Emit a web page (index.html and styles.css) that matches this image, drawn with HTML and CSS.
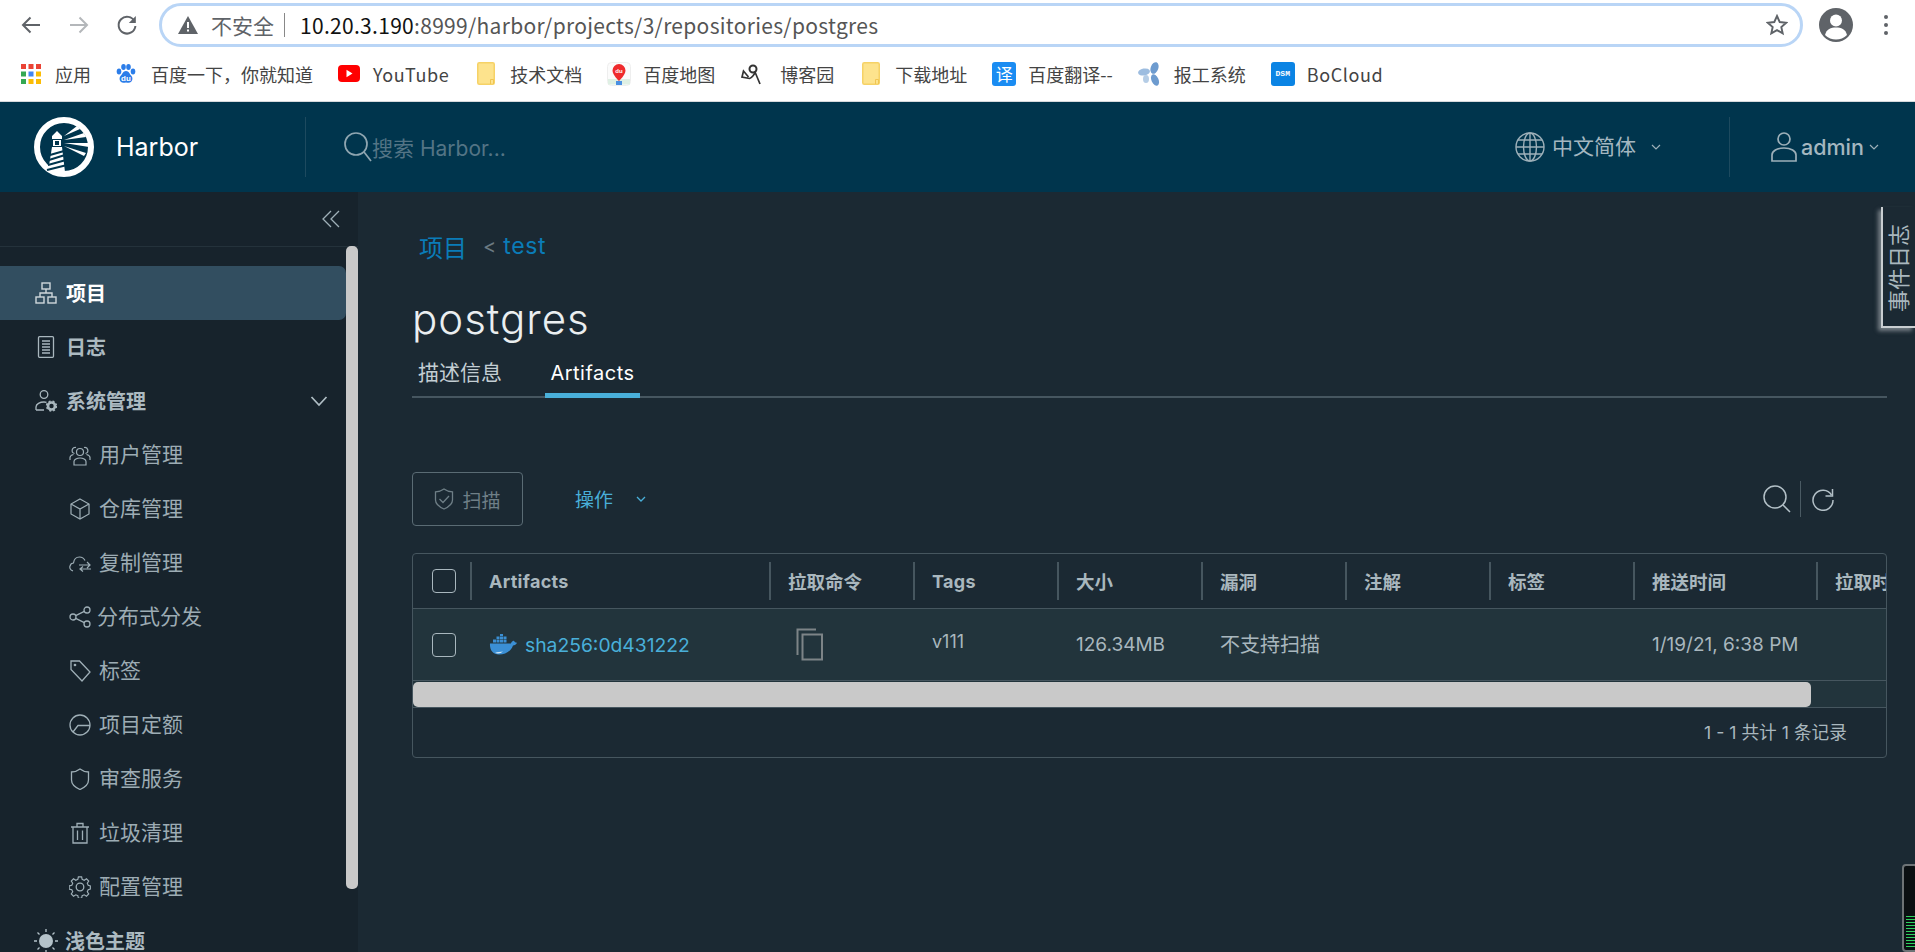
FILE: index.html
```html
<!DOCTYPE html>
<html lang="zh-CN">
<head>
<meta charset="utf-8">
<title>Harbor</title>
<link rel="stylesheet" href="styles.css">
</head>
<body>
<div class="browser-bar">
  <svg class="nav-ico" viewBox="0 0 22 22"><path d="M20 11H3M10.5 3.5 3 11l7.5 7.5" fill="none" stroke="#5f6368" stroke-width="2"/></svg>
  <svg class="nav-ico nav-fwd" viewBox="0 0 22 22"><path d="M2 11h17M11.5 3.5 19 11l-7.5 7.5" fill="none" stroke="#b4b7ba" stroke-width="2"/></svg>
  <svg class="nav-ico nav-reload" viewBox="0 0 22 22"><path d="M18.6 7.5A8.4 8.4 0 1 0 19.4 12" fill="none" stroke="#5f6368" stroke-width="2"/><path d="M19.8 2v7h-7z" fill="#5f6368"/></svg>
  <div class="omnibox">
    <svg class="warn" viewBox="0 0 20 18"><path d="M10 0 20 18H0z" fill="#5f6368"/><path d="M9 6h2v6H9zM9 13.5h2v2H9z" fill="#fff"/></svg>
    <span class="insecure">不安全</span>
    <span class="omni-sep"></span>
    <span class="url"><b>10.20.3.190</b>:8999/harbor/projects/3/repositories/postgres</span>
    <svg class="star" viewBox="0 0 22 22"><path d="m11 2 2.7 6 6.5.7-4.9 4.3 1.4 6.4L11 16.100l-5.700 3.300L6.700 13 1.800 8.700 8.300 8z" fill="none" stroke="#5f6368" stroke-width="1.900"/></svg>
  </div>
  <svg class="avatar" viewBox="0 0 34 34"><circle cx="17" cy="17" r="17" fill="#5f6368"/><circle cx="17" cy="12.500" r="6" fill="#fff"/><path d="M6 27c1.500-6 6-7.500 11-7.500S26.500 21 28 27c-3 3-7 4.500-11 4.500S9 30 6 27z" fill="#fff"/></svg>
  <svg class="dots" viewBox="0 0 6 22"><circle cx="3" cy="3" r="2" fill="#5f6368"/><circle cx="3" cy="11" r="2" fill="#5f6368"/><circle cx="3" cy="19" r="2" fill="#5f6368"/></svg>
</div>

<div class="bookmarks">
  <a class="bm bm-apps">
    <svg class="bm-ico" viewBox="0 0 20 20"><rect width="5" height="5" fill="#ea4335"/><rect x="7.500" width="5" height="5" fill="#ea4335"/><rect x="15" width="5" height="5" fill="#ea4335"/><rect y="7.500" width="5" height="5" fill="#34a853"/><rect x="7.500" y="7.500" width="5" height="5" fill="#4285f4"/><rect x="15" y="7.500" width="5" height="5" fill="#fbbc05"/><rect y="15" width="5" height="5" fill="#34a853"/><rect x="7.500" y="15" width="5" height="5" fill="#fbbc05"/><rect x="15" y="15" width="5" height="5" fill="#fbbc05"/></svg>
    <span>应用</span>
  </a>
  <a class="bm bm-baidu">
    <svg class="bm-ico" viewBox="0 0 20 20"><ellipse cx="3" cy="7.500" rx="2.300" ry="3" fill="#2b7de9"/><ellipse cx="7.500" cy="3" rx="2.300" ry="3" fill="#2b7de9"/><ellipse cx="12.500" cy="3" rx="2.300" ry="3" fill="#2b7de9"/><ellipse cx="17" cy="7.500" rx="2.300" ry="3" fill="#2b7de9"/><path d="M10 7c3 0 3.500 3 5.500 5 2 2.500.5 7-3 6.800-1 0-1.500-.4-2.500-.4s-1.500.4-2.500.4c-3.500.2-5-4.300-3-6.800C6.500 10 7 7 10 7z" fill="#2b7de9"/><text class="du" x="10" y="17" text-anchor="middle">du</text></svg>
    <span>百度一下，你就知道</span>
  </a>
  <a class="bm bm-youtube">
    <svg class="bm-ico bm-yt" viewBox="0 0 22 17"><rect width="22" height="17" rx="4" fill="#f00"/><path d="m8.500 4.800 6 3.700-6 3.700z" fill="#fff"/></svg>
    <span class="bm-latin">YouTube</span>
  </a>
  <a class="bm bm-folder-item">
    <svg class="bm-ico bm-folder" viewBox="0 0 18 23"><rect x=".75" y=".75" width="16.500" height="21.500" rx="1.500" fill="#fde38d" stroke="#f6d266" stroke-width="1.500"/><path d="M13.500 22v-4.500h3V22" fill="none" stroke="#f0c552"/></svg>
    <span>技术文档</span>
  </a>
  <a class="bm bm-tight">
    <svg class="bm-ico bm-map" viewBox="0 0 24 24"><rect x=".5" y=".5" width="23" height="23" rx="4" fill="#fbfbfb" stroke="#eee"/><path d="M1 17h22v5.500H1z" fill="#dff0e4"/><path d="M9 23h6v-4H9z" fill="#4a90e2"/><path d="M12 2a6.500 6.500 0 0 1 6.500 6.500C18.500 13 12 19 12 19S5.500 13 5.500 8.500A6.500 6.500 0 0 1 12 2z" fill="#ef2b2d"/><text class="du du-map" x="12" y="10.500" text-anchor="middle">du</text></svg>
    <span>百度地图</span>
  </a>
  <a class="bm bm-blog">
    <svg class="bm-ico" viewBox="0 0 22 22"><circle cx="13" cy="6" r="3.500" fill="none" stroke="#333" stroke-width="2"/><path d="M15.500 8c-.5 3-4 7-6 7.500L2 14l1.500-6 5 6M15 9l5 12" fill="none" stroke="#333" stroke-width="1.700"/></svg>
    <span>博客园</span>
  </a>
  <a class="bm bm-folder-item">
    <svg class="bm-ico bm-folder" viewBox="0 0 18 23"><rect x=".75" y=".75" width="16.500" height="21.500" rx="1.500" fill="#fde38d" stroke="#f6d266" stroke-width="1.500"/><path d="M13.500 22v-4.500h3V22" fill="none" stroke="#f0c552"/></svg>
    <span>下载地址</span>
  </a>
  <a class="bm bm-tight">
    <span class="tile tile-yi">译</span>
    <span>百度翻译--</span>
  </a>
  <a class="bm bm-tight">
    <svg class="bm-ico bm-fan" viewBox="0 0 24 24"><g fill="#6d9bcf"><ellipse cx="16.500" cy="6" rx="3.800" ry="6" transform="rotate(20 16.500 6)"/><ellipse cx="17" cy="18" rx="3.500" ry="6" transform="rotate(-25 17 18)"/><ellipse cx="6" cy="10" rx="6" ry="3.500" transform="rotate(-10 6 10)" fill="#9dbde0"/><ellipse cx="8" cy="17" rx="3" ry="4" fill="#b5cde6"/></g></svg>
    <span>报工系统</span>
  </a>
  <a class="bm bm-tight">
    <span class="tile tile-dsm">DSM</span>
    <span class="bm-latin">BoCloud</span>
  </a>
</div>

<header class="app-header">
  <div class="brand">
    <svg class="logo" viewBox="0 0 60 60">
      <circle cx="30" cy="30" r="27" fill="none" stroke="#fff" stroke-width="6"/>
      <path d="M18 19l5-5 5 5v3h-10zM19 23h8v6h-8zM18 30h10l3 25H14z" fill="#fff"/>
      <rect x="21" y="24" width="4" height="4" fill="#00354d"/>
      <path d="m16 38 14-4M15 43l16-5M14 48l18-5M13 53l20-5" stroke="#00354d" stroke-width="2"/>
      <path d="m30 19 13-10 3 3zM30 23l20-7 2 4zM30 26h25v4zM30 29l22 7-2 3z" fill="#fff"/>
    </svg>
    <span class="brand-name">Harbor</span>
  </div>
  <div class="search">
    <svg class="search-ico" viewBox="0 0 30 30"><circle cx="13" cy="12" r="11" fill="none" stroke="#8fa6b1" stroke-width="1.700"/><path d="m21 20 7 9" stroke="#8fa6b1" stroke-width="1.700"/></svg>
    <span class="search-text">搜索 Harbor...</span>
  </div>
  <div class="lang">
    <svg class="globe" viewBox="0 0 30 30"><g fill="none" stroke="#9db0b9" stroke-width="1.400"><circle cx="15" cy="15" r="14"/><ellipse cx="15" cy="15" rx="6.500" ry="14"/><path d="M15 1v28M1 15h28M3 8h24M3 22h24"/></g></svg>
    <span class="lang-text">中文简体</span>
    <svg class="chev-sm" viewBox="0 0 10 6"><path d="m1 1 4 4 4-4" fill="none" stroke="#9db0b9" stroke-width="1.200"/></svg>
  </div>
  <div class="user">
    <svg class="user-ico" viewBox="0 0 26 30"><g fill="none" stroke="#9db0b9" stroke-width="1.700"><circle cx="13" cy="7" r="6"/><path d="M1 29v-6c0-4 5-7 12-7s12 3 12 7v6z"/></g></svg>
    <span class="user-name">admin</span>
    <svg class="chev-sm chev-user" viewBox="0 0 10 6"><path d="m1 1 4 4 4-4" fill="none" stroke="#9db0b9" stroke-width="1.200"/></svg>
  </div>
</header>

<div class="app-body">
  <aside class="sidebar">
    <div class="collapse-row">
      <svg class="collapse" viewBox="0 0 18 18"><path d="M9 1 1 9l8 8M17 1 9 9l8 8" fill="none" stroke="#9fb0b8" stroke-width="1.300"/></svg>
    </div>
    <div class="side-scroll">
      <nav class="nav">
        <a class="nav-item main-item active">
          <svg class="nav-icon" viewBox="0 0 22 22"><g fill="none" stroke="#cfd8dc" stroke-width="1.400"><rect x="7" y="1" width="8" height="6"/><rect x="1" y="15" width="8" height="6"/><rect x="13" y="15" width="8" height="6"/><path d="M11 7v4M5 15v-4h12v4"/></g></svg>
          <span>项目</span>
        </a>
        <a class="nav-item main-item">
          <svg class="nav-icon" viewBox="0 0 22 22"><g fill="none" stroke="#a9b7be" stroke-width="1.300"><rect x="3.500" y=".7" width="15" height="20.600" rx="1"/><path d="M7 5h8M7 8h8M7 11h8M7 14h8M7 17h8"/></g></svg>
          <span>日志</span>
        </a>
        <a class="nav-item main-item">
          <svg class="nav-icon" viewBox="0 0 22 22"><g fill="none" stroke="#a9b7be" stroke-width="1.300"><circle cx="9" cy="4.500" r="3.800"/><path d="M1 20v-3c0-3 4-5 8-5 1 0 2 .1 2.500.3M1 20h8"/></g><circle cx="16.500" cy="16" r="3.500" fill="none" stroke="#a9b7be" stroke-width="2.600"/><circle cx="16.500" cy="16" r="5" fill="none" stroke="#a9b7be" stroke-width="1.400" stroke-dasharray="2 2"/></svg>
          <span>系统管理</span>
          <svg class="nav-chev" viewBox="0 0 18 12"><path d="m1.500 2 7.500 8 7.500-8" fill="none" stroke="#b0bec5" stroke-width="1.700"/></svg>
        </a>
        <a class="nav-item sub-item">
          <svg class="nav-icon" viewBox="0 0 22 22"><g fill="none" stroke="#9fafb7" stroke-width="1.200"><circle cx="11" cy="8" r="3.500"/><path d="M5 21v-3.500c0-2 3-3.500 6-3.500s6 1.500 6 3.500V21zM5.500 9.500a3 3 0 1 1 1.500-6M16.500 9.500a3 3 0 1 0-1.500-6M1 16v-2.500c0-1.500 1.500-2.500 3.500-3M21 16v-2.500c0-1.500-1.500-2.500-3.500-3"/></g></svg>
          <span>用户管理</span>
        </a>
        <a class="nav-item sub-item">
          <svg class="nav-icon" viewBox="0 0 22 22"><g fill="none" stroke="#9fafb7" stroke-width="1.200"><path d="M11 1 20 6v10l-9 5-9-5V6z"/><path d="m2 6 9 5 9-5M11 11v10"/></g></svg>
          <span>仓库管理</span>
        </a>
        <a class="nav-item sub-item">
          <svg class="nav-icon" viewBox="0 0 22 22"><g fill="none" stroke="#9fafb7" stroke-width="1.200"><path d="M4 19C1 18 .5 15.500 1 14c.5-2 2-3 3.500-3C5 7 7.500 5 10.500 5c2.500 0 4.500 1.500 5.500 3.500"/><path d="M10 13h11M18 10l3 3-3 3M22 17H11M14 14.500l-3 2.500 3 2.500"/></g></svg>
          <span>复制管理</span>
        </a>
        <a class="nav-item sub-item sub-wide">
          <svg class="nav-icon" viewBox="0 0 22 22"><g fill="none" stroke="#9fafb7" stroke-width="1.300"><circle cx="4" cy="11" r="3"/><circle cx="18" cy="4" r="3"/><circle cx="18" cy="18" r="3"/><path d="m6.700 9.700 8.600-4.400M6.700 12.300l8.600 4.400"/></g></svg>
          <span>分布式分发</span>
        </a>
        <a class="nav-item sub-item">
          <svg class="nav-icon" viewBox="0 0 22 22"><g fill="none" stroke="#9fafb7" stroke-width="1.300"><path d="M2 1h8.500L21 12l-8 9L2 9.500z"/><circle cx="6" cy="5" r=".7"/></g></svg>
          <span>标签</span>
        </a>
        <a class="nav-item sub-item">
          <svg class="nav-icon" viewBox="0 0 22 22"><g fill="none" stroke="#9fafb7" stroke-width="1.300"><circle cx="11" cy="11" r="10"/><path d="m4 18 5-6.500h12"/></g></svg>
          <span>项目定额</span>
        </a>
        <a class="nav-item sub-item">
          <svg class="nav-icon" viewBox="0 0 22 22"><path d="M11 1c2.500 2 5.500 3 8.500 3v8c0 4.500-4 7.500-8.500 9.500C6.500 19.500 2.500 16.500 2.500 12V4c3 0 6-1 8.500-3z" fill="none" stroke="#9fafb7" stroke-width="1.300"/></svg>
          <span>审查服务</span>
        </a>
        <a class="nav-item sub-item">
          <svg class="nav-icon" viewBox="0 0 22 22"><g fill="none" stroke="#9fafb7" stroke-width="1.300"><path d="M2 5h18M8 5V1.500h6V5M4 5v16h14V5M8.500 8.500V18M13.500 8.500V18"/></g></svg>
          <span>垃圾清理</span>
        </a>
        <a class="nav-item sub-item">
          <svg class="nav-icon" viewBox="0 0 22 22"><g fill="none" stroke="#9fafb7" stroke-width="1.300"><circle cx="11" cy="11" r="3.800"/><path d="M9.200 1h3.600l.6 2.800 2.300 1 2.500-1.600 2.500 2.600-1.600 2.400 1 2.300 2.400.6v3.600l-2.400.6-1 2.300 1.600 2.400-2.500 2.600-2.500-1.600-2.300 1-.6 2.800H9.200l-.6-2.800-2.300-1-2.500 1.600-2.500-2.600 1.600-2.400-1-2.300L-1 14.700v-3.600l2.900-.6 1-2.300L1.300 5.800l2.500-2.600 2.500 1.600 2.300-1z" transform="translate(1.100 -.1) scale(.9)"/></g></svg>
          <span>配置管理</span>
        </a>
        <a class="nav-item main-item">
          <svg class="nav-icon nav-sun" viewBox="0 0 24 24"><circle cx="12" cy="12" r="7" fill="#b4c2c9"/><path d="M12 0v3M12 21v3M0 12h3M21 12h3M3.500 3.500l2 2M18.500 18.500l2 2M20.500 3.500l-2 2M5.500 18.500l-2 2" stroke="#b4c2c9" stroke-width="1.300"/></svg>
          <span>浅色主题</span>
        </a>
      </nav>
      <div class="side-track"><div class="side-thumb"></div></div>
    </div>
  </aside>

  <main class="content">
    <div class="crumbs"><a class="crumb-cn">项目</a><span class="crumb-sep">&lt;</span><a class="crumb-test">test</a></div>
    <h1 class="title">postgres</h1>
    <div class="tabs">
      <a class="tab tab-first">描述信息</a>
      <a class="tab tab-active">Artifacts</a>
    </div>
    <div class="toolbar">
      <button class="scan-btn">
        <svg class="scan-ico" viewBox="0 0 20 22"><path d="M10 1c2.300 1.700 5 2.700 8.500 2.800V12c0 4-4 7-8.500 9-4.500-2-8.500-5-8.500-9V3.800C5 3.700 7.700 2.700 10 1z" fill="none" stroke="#6f7f87" stroke-width="1.300"/><path d="m5.500 11 3.500 3.500 6-6.500" fill="none" stroke="#6f7f87" stroke-width="1.300"/></svg>
        <span>扫描</span>
      </button>
      <a class="action"><span>操作</span><svg class="action-chev" viewBox="0 0 10 6"><path d="m1 1 4 4 4-4" fill="none" stroke="#49afd9" stroke-width="1.300"/></svg></a>
      <div class="tool-right">
        <svg class="tool-search" viewBox="0 0 28 28"><circle cx="12" cy="12" r="11" fill="none" stroke="#b3c0c7" stroke-width="1.500"/><path d="m20 20 7 7" stroke="#b3c0c7" stroke-width="1.500"/></svg>
        <span class="tool-sep"></span>
        <svg class="tool-refresh" viewBox="0 0 24 24"><path d="M20.500 8A10 10 0 1 0 22 13" fill="none" stroke="#b3c0c7" stroke-width="1.500"/><path d="M21.500 2v7h-7" fill="none" stroke="#b3c0c7" stroke-width="1.500"/></svg>
      </div>
    </div>

    <section class="grid">
      <div class="grid-row grid-head">
        <div class="cell-check"><span class="check"></span></div>
        <div class="hcell hcell-latin">Artifacts</div>
        <div class="hcell">拉取命令</div>
        <div class="hcell hcell-latin">Tags</div>
        <div class="hcell">大小</div>
        <div class="hcell">漏洞</div>
        <div class="hcell">注解</div>
        <div class="hcell">标签</div>
        <div class="hcell">推送时间</div>
        <div class="hcell">拉取时间</div>
      </div>
      <div class="grid-row grid-data">
        <div class="cell-check"><span class="check"></span></div>
        <div class="dcell">
          <svg class="whale" viewBox="0 0 28 21"><path d="M1 9.500h21c.5-2 2-3 3-2.800.5 1 .9 1.700 3 2-.8 1.800-2.300 2.600-4 2.700C22 17 16.500 20.500 10 20.500 4 20.500.5 16 1 9.500z" fill="#3b8fd4"/><g fill="#3b8fd4"><rect x="4" y="5.500" width="3" height="3"/><rect x="7.500" y="5.500" width="3" height="3"/><rect x="11" y="5.500" width="3" height="3"/><rect x="14.500" y="5.500" width="3" height="3"/><rect x="7.500" y="2.500" width="3" height="2.500"/><rect x="11" y="2.500" width="3" height="2.500"/><rect x="14.500" y="2.500" width="3" height="2.500"/><rect x="11" y="0" width="3" height="2"/></g><path d="M6 19c3 1 6 .5 8-1.500-2 .2-6 .5-8 1.500z" fill="#cfe6f6"/></svg>
          <a class="sha">sha256:0d431222</a>
        </div>
        <div class="dcell">
          <svg class="copy" viewBox="0 0 27 33"><path d="M20 1.500H1.500V27" fill="none" stroke="#7d8487" stroke-width="2"/><rect x="6.500" y="6.500" width="19.500" height="25" fill="none" stroke="#7d8487" stroke-width="2"/></svg>
        </div>
        <div class="dcell dcell-tag">v111</div>
        <div class="dcell">126.34MB</div>
        <div class="dcell dcell-cn">不支持扫描</div>
        <div class="dcell"></div>
        <div class="dcell"></div>
        <div class="dcell">1/19/21, 6:38 PM</div>
        <div class="dcell"></div>
      </div>
      <div class="h-track"><div class="h-thumb"></div></div>
      <div class="grid-foot"><span>1 - 1 共计 1 条记录</span></div>
    </section>
  </main>
</div>

<div class="event-tab"><span>事件日志</span></div>
<div class="meter">
  <i></i><i></i><i></i><i></i><i></i><i></i><i></i><i></i><i></i><i></i><i></i>
</div>
</body>
</html>
```
FILE: styles.css
```css
* { box-sizing: border-box; }
html, body { margin: 0; height: 952px; overflow: hidden; }
body {
  width: 1915px;
  position: relative;
  background: #1b2933;
  font-family: Inter, "Noto Sans CJK SC", sans-serif;
  color: #a9b7be;
}
svg { display: block; flex: none; }
a { text-decoration: none; }

/* browser chrome */
.browser-bar {
  height: 50px;
  background: #fff;
  display: flex;
  align-items: center;
  padding-left: 20px;
}
.nav-ico { width: 22px; height: 22px; }
.nav-fwd { margin-left: 26px; }
.nav-reload { margin-left: 26px; margin-right: 21px; }
.omnibox {
  width: 1644px;
  height: 44px;
  border: 3px solid #b9d5f6;
  border-radius: 22px;
  display: flex;
  align-items: center;
  padding-left: 16px;
  font-family: "Noto Sans CJK SC", sans-serif;
  font-size: 20px;
  color: #5f6368;
}
.warn { width: 20px; height: 18px; }
.insecure { margin-left: 13px; font-size: 21px; }
.omni-sep { width: 1px; height: 24px; background: #888; margin: 0 15px 0 10px; }
.url { color: #555; font-size: 21px; letter-spacing: .3px; }
.url b { font-weight: 400; color: #111; }
.star { width: 22px; height: 22px; margin-left: auto; margin-right: 12px; }
.avatar { width: 34px; height: 34px; margin-left: 16px; }
.dots { width: 6px; height: 22px; margin-left: 30px; }

.bookmarks {
  height: 52px;
  background: #fff;
  border-bottom: 1px solid #d6d9dc;
  display: flex;
  align-items: center;
  padding-left: 21px;
  padding-bottom: 4px;
  gap: 25px;
  font-family: "Noto Sans CJK SC", sans-serif;
  font-size: 18px;
  color: #444;
}
.bm { display: flex; align-items: center; gap: 14px; white-space: nowrap; }
.bm-baidu { gap: 15px; }
.bm-youtube { gap: 13px; }
.bm-latin { letter-spacing: .6px; }
.bm-tight { gap: 12px; }
.bm-blog { gap: 18px; }
.bm-ico { width: 20px; height: 20px; }
.bm-yt { width: 22px; height: 17px; }
.bm-folder { width: 18px; height: 23px; }
.bm-folder-item { gap: 15px; margin-left: 3px; }
.bm-map { width: 24px; height: 24px; }
.bm-fan { width: 24px; height: 24px; }
.bm-blog svg { width: 22px; height: 22px; }
.du { font: 700 8px "Liberation Sans", sans-serif; fill: #fff; }
.du-map { font-size: 6px; }
.tile {
  width: 24px;
  height: 24px;
  border-radius: 3px;
  color: #fff;
  background: #1a8cf2;
  display: flex;
  align-items: center;
  justify-content: center;
  font-size: 17px;
  line-height: 1;
}
.tile-dsm {
  background: #0b84e4;
  font: 700 8px "Liberation Mono", monospace;
}

/* harbor header */
.app-header {
  height: 90px;
  background: #00354d;
  display: flex;
  align-items: center;
  color: #a4b7c0;
}
.brand {
  width: 306px;
  height: 60px;
  padding-left: 34px;
  display: flex;
  align-items: center;
  gap: 22px;
  border-right: 1px solid #1d4a5f;
}
.logo { width: 60px; height: 60px; }
.brand-name { color: #fff; font-size: 25px; font-weight: 400; }
.search { display: flex; align-items: center; padding-left: 37px; flex: 1; }
.search-ico { width: 30px; height: 30px; }
.search-text { color: #537485; font-size: 21px; margin-left: -1px; }
.lang {
  display: flex;
  align-items: center;
  font-family: "Noto Sans CJK SC", sans-serif;
  font-size: 21px;
  margin-right: 68px;
}
.lang-text { padding-bottom: 4px; }
.globe { width: 30px; height: 30px; margin-right: 7px; }
.chev-sm { width: 10px; height: 6px; margin-left: 15px; }
.user {
  width: 186px;
  height: 60px;
  border-left: 1px solid #1d4a5f;
  padding-left: 41px;
  display: flex;
  align-items: center;
}
.user-ico { width: 26px; height: 30px; }
.user-name { font-size: 21.500px; font-weight: 500; margin-left: 4px; }
.chev-user { margin-left: 5px; }

/* layout */
.app-body { display: flex; height: 760px; }
.sidebar { width: 358px; background: #17232c; overflow: hidden; flex: none; }
.collapse-row {
  height: 55px;
  border-bottom: 1px solid #24323b;
  display: flex;
  align-items: center;
  justify-content: flex-end;
  padding-right: 18px;
}
.collapse { width: 18px; height: 18px; margin-top: -1px; }
.side-scroll { display: flex; }
.nav { width: 346px; padding-top: 19px; flex: none; }
.nav-item {
  height: 54px;
  display: flex;
  align-items: center;
  white-space: nowrap;
  border-radius: 0 7px 7px 0;
}
.main-item {
  padding-left: 35px;
  gap: 9px;
  font-size: 20px;
  font-weight: 700;
  color: #acbac1;
}
.main-item span { margin-bottom: 1px; }
.sub-item {
  padding-left: 69px;
  gap: 8px;
  font-size: 21px;
  color: #9dacb4;
  font-weight: 400;
}
.sub-item span { margin-bottom: 5px; }
.sub-wide { gap: 6px; }
.active { background: #324e60; color: #fff; }
.nav-icon { width: 22px; height: 22px; margin-bottom: 1px; }
.nav-sun { width: 24px; height: 24px; margin-right: -2px; margin-left: -1px; }
.nav-chev { width: 18px; height: 12px; margin-left: auto; margin-right: 18px; }
.side-track { width: 12px; }
.side-thumb { width: 12px; height: 643px; background: #c9c9c9; border-radius: 5px; margin-top: -1px; }

/* content */
.content { flex: 1; min-width: 0; padding: 39px 28px 0 54px; }
.crumbs { height: 30px; display: flex; align-items: center; padding-left: 7px; }
.crumb-cn { font-size: 24px; color: #0a7cb8; }
.crumb-sep { font-size: 20px; color: #6b7a82; margin: 0 7px 0 16px; }
.crumb-test { font-size: 23px; color: #0a7cb8; letter-spacing: .6px; }
.title {
  margin: 28px 0 0;
  height: 61px;
  line-height: 60px;
  font-size: 42px;
  letter-spacing: 1px;
  font-weight: 300;
  color: #eaeef0;
}
.tabs { height: 48px; border-bottom: 2px solid #465660; display: flex; }
.tab {
  height: 48px;
  display: flex;
  align-items: center;
  color: #c3ced3;
}
.tab-first { font-size: 21px; padding-left: 6px; padding-bottom: 7px; width: 133px; }
.tab-active {
  width: 95px;
  justify-content: center;
  font-size: 20px;
  letter-spacing: .5px;
  padding-top: 2px;
  color: #fff;
  border-bottom: 5px solid #49afd9;
}
.toolbar { margin-top: 74px; height: 54px; display: flex; align-items: center; }
.scan-btn {
  width: 111px;
  height: 54px;
  background: none;
  border: 1px solid #5a6b74;
  border-radius: 4px;
  display: flex;
  align-items: center;
  justify-content: center;
  gap: 8px;
  font: 19px "Noto Sans CJK SC", sans-serif;
  color: #6f7f87;
  padding: 0;
}
.scan-ico { width: 20px; height: 22px; }
.action { margin-left: 52px; display: flex; align-items: center; gap: 23px; font-size: 19px; color: #49afd9; }
.action span { margin-bottom: 2px; }
.action-chev { width: 10px; height: 6px; }
.tool-right { margin-left: auto; margin-right: 52px; display: flex; align-items: center; }
.tool-search { width: 28px; height: 28px; }
.tool-sep { width: 1px; height: 36px; background: #4a5a63; margin: 0 10px 0 9px; }
.tool-refresh { width: 24px; height: 24px; }

/* table */
.grid {
  margin-top: 27px;
  width: 1475px;
  height: 205px;
  border: 1px solid #46565f;
  border-radius: 4px;
  overflow: hidden;
}
.grid-row {
  display: grid;
  grid-template-columns: 57px 299px 144px 144px 144px 144px 144px 144px 183px 200px;
  align-items: center;
  border-bottom: 1px solid #46565f;
}
.grid-head { height: 55px; }
.grid-data { height: 72px; background: #22343c; }
.cell-check { padding-left: 19px; }
.check {
  display: block;
  width: 24px;
  height: 24px;
  border: 1px solid #a9b7be;
  border-radius: 4px;
}
.hcell {
  height: 38px;
  border-left: 2px solid #46565f;
  padding-left: 17px;
  display: flex;
  align-items: center;
  font-size: 18.500px;
  font-weight: 700;
  color: #a9b7be;
  white-space: nowrap;
}
.hcell-latin { font-size: 18px; letter-spacing: .3px; }
.dcell {
  padding-left: 19px;
  display: flex;
  align-items: center;
  font-size: 19px;
  color: #a9b7be;
  white-space: nowrap;
}
.dcell-cn { font-size: 20px; padding-bottom: 2px; }
.dcell-tag { padding-bottom: 6px; font-size: 18px; }
.whale { width: 28px; height: 21px; }
.sha { margin-left: 8px; color: #49afd9; font-size: 19.300px; }
.copy { width: 27px; height: 33px; margin-left: 8px; }
.h-track { height: 27px; background: #22343c; border-bottom: 1px solid #46565f; padding-top: 1px; }
.h-thumb { width: 1398px; height: 25px; background: #c9c9c9; border-radius: 5px; }
.grid-foot {
  height: 50px;
  display: flex;
  align-items: center;
  justify-content: flex-end;
  padding-right: 39px;
  font-size: 17.700px;
  color: #a9b7be;
}
.grid-foot span { margin-bottom: 4px; }

/* overlays */
.event-tab {
  position: absolute;
  left: 1881px;
  top: 207px;
  width: 34px;
  height: 121px;
  padding-top: 4px;
  background: #1b2933;
  border-left: 2px solid #c9ced1;
  border-bottom: 2px solid #c9ced1;
  box-shadow: -3px 3px 4px rgba(190, 195, 198, .55);
  display: flex;
  align-items: center;
  justify-content: center;
}
.event-tab span {
  writing-mode: vertical-rl;
  text-orientation: sideways;
  transform: rotate(180deg);
  font-size: 22px;
  line-height: 1;
  color: #a9b7be;
}
.meter {
  position: absolute;
  left: 1902px;
  top: 864px;
  width: 16px;
  height: 88px;
  background: #0a0f12;
  border: 2px solid #6d7376;
  border-radius: 4px;
  padding: 50px 0 0 2px;
  display: flex;
  flex-direction: column;
  gap: 2px;
}
.meter i { display: block; width: 10px; height: 1px; background: #2fd15f; }
```
